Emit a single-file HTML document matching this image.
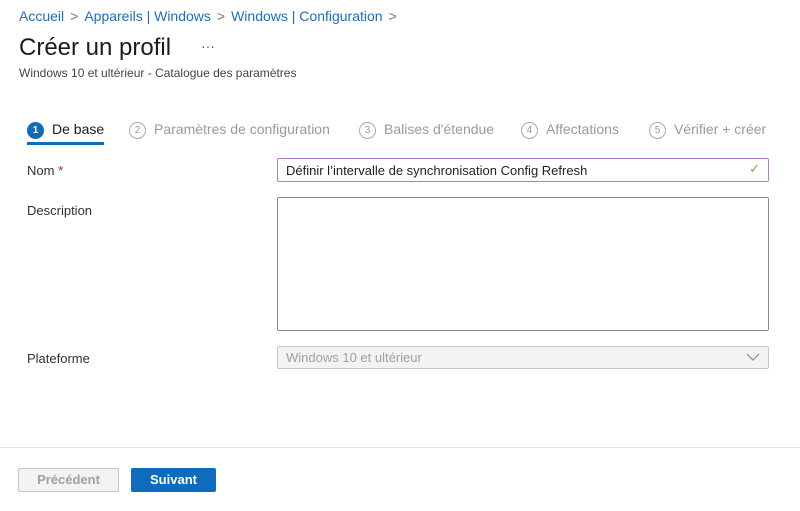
<!DOCTYPE html>
<html><head><meta charset="utf-8"><style>
*{margin:0;padding:0;box-sizing:border-box}
body{width:800px;height:511px;background:#fff;font-family:"Liberation Sans",sans-serif;position:relative;overflow:hidden;color:#323130}
.a{position:absolute;white-space:nowrap}
.bc{top:8px;left:19px;font-size:14px;color:#1b6ec2}
.bc span{color:#777;margin:0 6px}
.step{top:121px;font-size:14px;color:#9a9a9a}
.circ{display:inline-block;width:17px;height:17px;border:1px solid #aaa;border-radius:50%;font-size:10px;text-align:center;line-height:15px;margin-right:8px;vertical-align:1px}
.lbl{font-size:13px;color:#323130}
.box{position:absolute;left:277px;width:492px;border:1px solid #8a8a8a;border-radius:2px}
</style></head><body>
<div class="a bc">Accueil<span>&gt;</span>Appareils | Windows<span>&gt;</span>Windows | Configuration<span>&gt;</span></div>
<div class="a" style="top:34px;left:19px;font-size:24px;color:#1b1b1b">Créer un profil</div>
<div class="a" style="top:38px;left:201px;font-size:14px;color:#555">···</div>
<div class="a" style="top:66px;left:19px;font-size:12px;color:#444">Windows 10 et ultérieur - Catalogue des paramètres</div>
<div class="a step" style="left:27px;color:#1b1b1b"><span class="circ" style="background:#0f6cbd;border-color:#0f6cbd;color:#fff;font-weight:bold">1</span>De base</div>
<div class="a" style="left:27px;top:142px;width:77px;height:3px;background:#0f6cbd"></div>
<div class="a step" style="left:129px"><span class="circ">2</span>Paramètres de configuration</div>
<div class="a step" style="left:359px"><span class="circ">3</span>Balises d'étendue</div>
<div class="a step" style="left:521px"><span class="circ">4</span>Affectations</div>
<div class="a step" style="left:649px"><span class="circ">5</span>Vérifier + créer</div>
<div class="a lbl" style="left:27px;top:163px">Nom <span style="color:#a4262c">*</span></div>
<div class="box" style="top:158px;height:24px;border-color:#b07cc6;font-size:13px;padding:4px 8px;color:#222">Définir l’intervalle de synchronisation Config Refresh<span style="position:absolute;right:8px;top:2px;color:#6bb13b">✓</span></div>
<div class="a lbl" style="left:27px;top:203px">Description</div>
<div class="box" style="top:197px;height:134px"></div>
<div class="a lbl" style="left:27px;top:351px">Plateforme</div>
<div class="box" style="top:346px;height:23px;background:#f3f3f3;border-color:#c8c8c8;font-size:13px;padding:3px 8px;color:#a0a0a0">Windows 10 et ultérieur
<svg style="position:absolute;right:8px;top:6px" width="14" height="8" viewBox="0 0 14 8"><path d="M1 1l6 6 6-6" fill="none" stroke="#888" stroke-width="1.2"/></svg></div>
<div class="a" style="left:0;top:447px;width:800px;height:1px;background:#e1e1e1"></div>
<div class="a" style="left:18px;top:468px;width:101px;height:24px;border:1px solid #c4c4c4;background:#f3f3f3;border-radius:2px;color:#a0a0a0;font-size:13px;font-weight:bold;text-align:center;line-height:22px">Précédent</div>
<div class="a" style="left:131px;top:468px;width:85px;height:24px;background:#0f6cbd;border-radius:2px;color:#fff;font-size:13px;font-weight:bold;text-align:center;line-height:24px">Suivant</div>
</body></html>
